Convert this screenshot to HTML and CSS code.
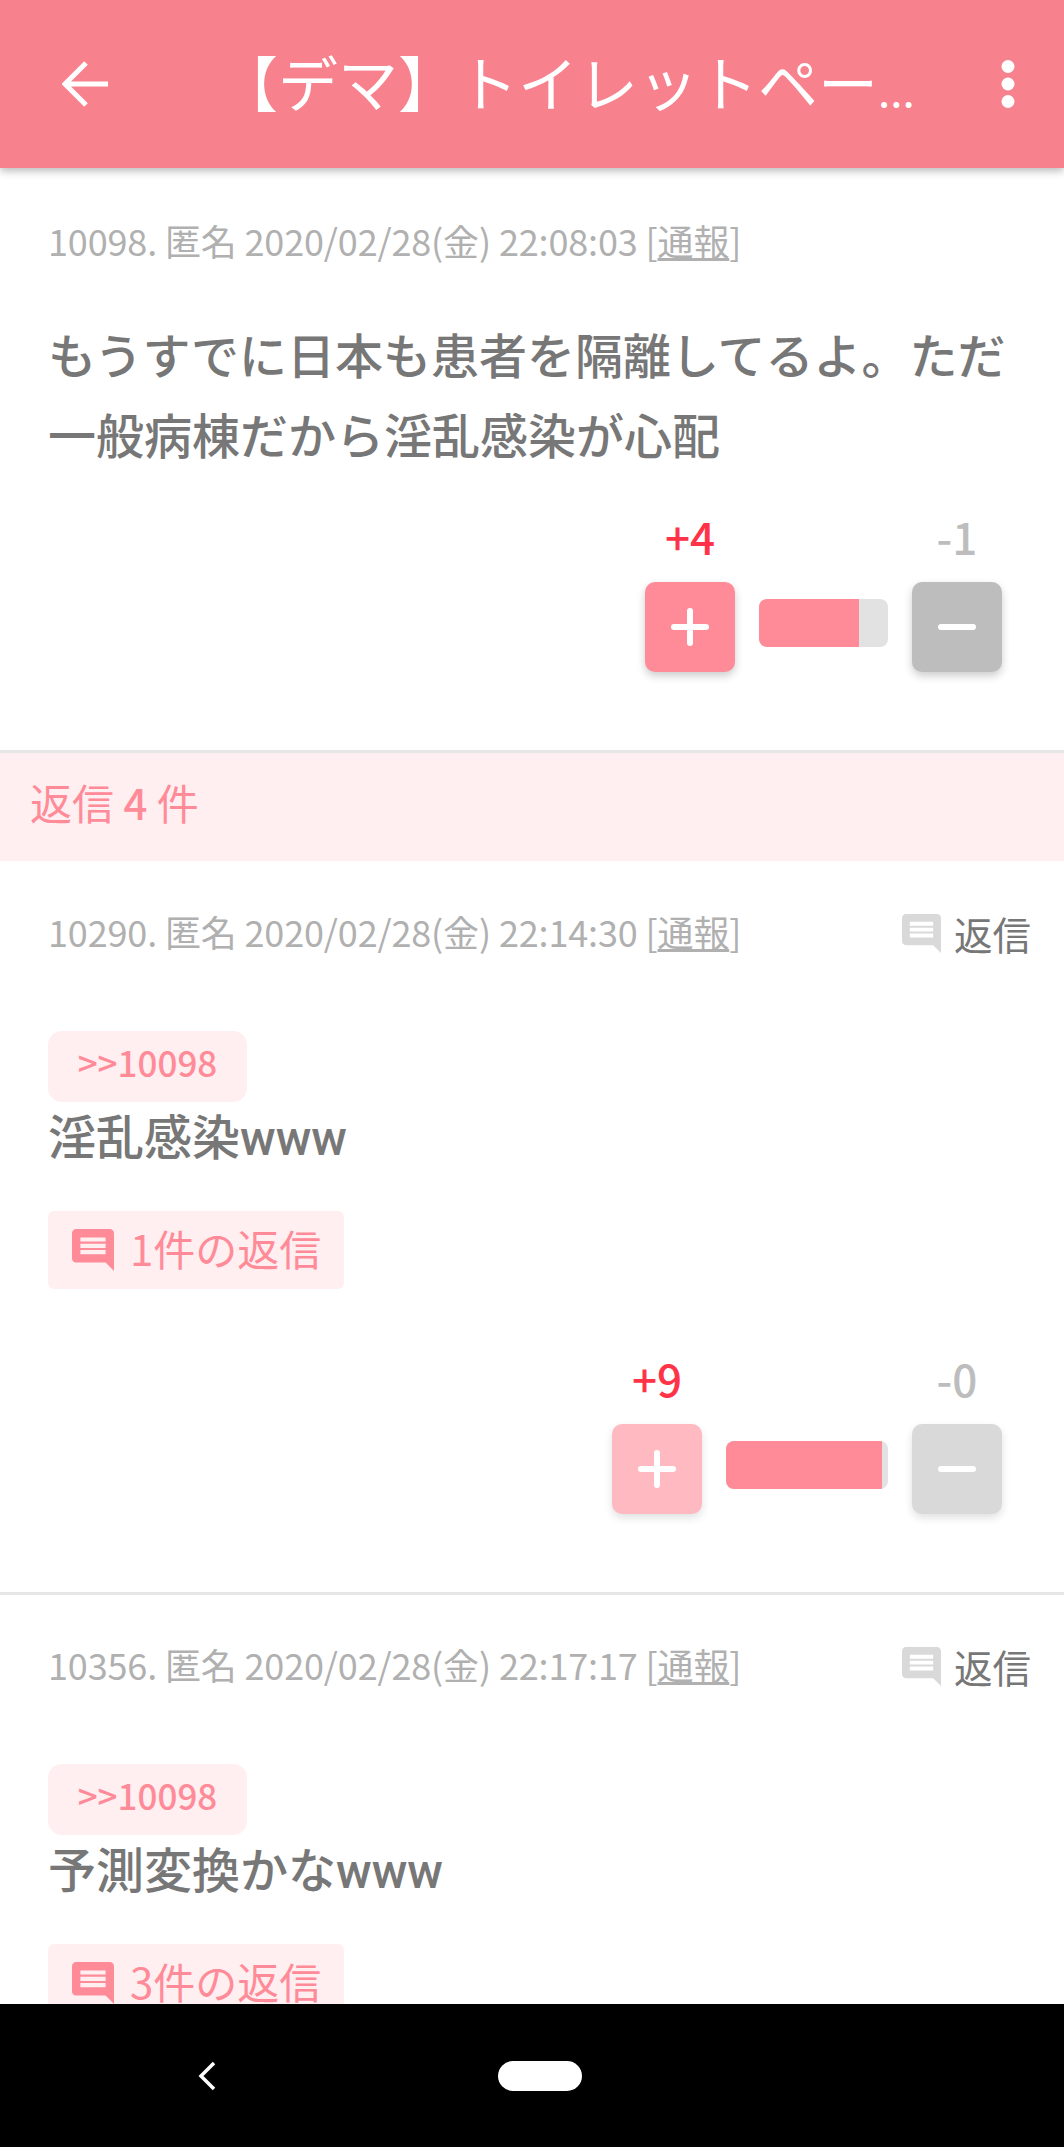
FILE: index.html
```html
<!DOCTYPE html>
<html lang="ja">
<head>
<meta charset="utf-8">
<title>【デマ】トイレットペー...</title>
<link rel="stylesheet" href="styles.css">
</head>
<body>
<div class="app">
  <header class="appbar">
    <svg class="back-icon" viewBox="0 0 48 48"><path d="M46 24H4M24 3 3 24l21 21" fill="none" stroke="#fff" stroke-width="5"/></svg>
    <div class="appbar-title">【デマ】トイレットペー<span class="dots">...</span></div>
    <svg class="more-icon" viewBox="0 0 14 48"><circle cx="7" cy="6.500" r="6.500" fill="#fff"/><circle cx="7" cy="24" r="6.500" fill="#fff"/><circle cx="7" cy="41.500" r="6.500" fill="#fff"/></svg>
  </header>
  <main class="list">
    <article class="post post-main">
      <div class="meta-row"><div class="meta">10098. 匿名 2020/02/28(金) 22:08:03 [<u>通報</u>]</div></div>
      <p class="main-text">もうすでに日本も患者を隔離してるよ。ただ<br>一般病棟だから淫乱感染が心配</p>
      <div class="votes">
        <div class="vote-col"><div class="count count-plus">+4</div><div class="vote-btn btn-plus"><span class="plus-mark"></span></div></div>
        <div class="ratio" style="width:129px"><div class="ratio-fill" style="width:77.500%"></div></div>
        <div class="vote-col"><div class="count count-minus">-1</div><div class="vote-btn btn-minus"><span class="minus-mark"></span></div></div>
      </div>
    </article>
    <div class="band">返信 <b>4</b> 件</div>
    <article class="post reply-post">
      <div class="meta-row"><div class="meta">10290. 匿名 2020/02/28(金) 22:14:30 [<u>通報</u>]</div><div class="reply-link"><svg class="icon-small" viewBox="2 2 20 20"><path d="M21.990 4c0-1.100-.890-2-1.990-2H4c-1.100 0-2 .900-2 2v12c0 1.100.900 2 2 2h14l4 4-.010-18zM18 14H6v-2h12v2zm0-3H6V9h12v2zm0-3H6V6h12v2z"/></svg>返信</div></div>
      <div class="anchor">&gt;&gt;10098</div>
      <p class="reply-text">淫乱感染www</p>
      <div class="thread"><svg class="icon-thread" viewBox="2 2 20 20"><path d="M21.990 4c0-1.100-.890-2-1.990-2H4c-1.100 0-2 .900-2 2v12c0 1.100.900 2 2 2h14l4 4-.010-18zM18 14H6v-2h12v2zm0-3H6V9h12v2zm0-3H6V6h12v2z"/></svg>1件の返信</div>
      <div class="votes votes-reply">
        <div class="vote-col"><div class="count count-plus">+9</div><div class="vote-btn btn-plus faded-plus"><span class="plus-mark"></span></div></div>
        <div class="ratio" style="width:162px"><div class="ratio-fill" style="width:96.300%"></div></div>
        <div class="vote-col"><div class="count count-minus">-0</div><div class="vote-btn btn-minus faded-minus"><span class="minus-mark"></span></div></div>
      </div>
    </article>
    <article class="post reply-post">
      <div class="meta-row"><div class="meta">10356. 匿名 2020/02/28(金) 22:17:17 [<u>通報</u>]</div><div class="reply-link"><svg class="icon-small" viewBox="2 2 20 20"><path d="M21.990 4c0-1.100-.890-2-1.990-2H4c-1.100 0-2 .900-2 2v12c0 1.100.900 2 2 2h14l4 4-.010-18zM18 14H6v-2h12v2zm0-3H6V9h12v2zm0-3H6V6h12v2z"/></svg>返信</div></div>
      <div class="anchor">&gt;&gt;10098</div>
      <p class="reply-text">予測変換かなwww</p>
      <div class="thread"><svg class="icon-thread" viewBox="2 2 20 20"><path d="M21.990 4c0-1.100-.890-2-1.990-2H4c-1.100 0-2 .900-2 2v12c0 1.100.900 2 2 2h14l4 4-.010-18zM18 14H6v-2h12v2zm0-3H6V9h12v2zm0-3H6V6h12v2z"/></svg>3件の返信</div>
    </article>
  </main>
  <nav class="navbar">
    <svg class="nav-back" viewBox="0 0 20 30"><path d="M17 2 4 15l13 13" fill="none" stroke="#fff" stroke-width="3.500"/></svg>
    <div class="nav-pill"></div>
  </nav>
</div>
</body>
</html>
```
FILE: styles.css
```css
* { box-sizing: border-box; }
html, body { margin: 0; padding: 0; background: #fff; }
body { font-family: "Noto Sans CJK JP", "Noto Sans", sans-serif; }
.app { width: 1064px; height: 2147px; display: flex; flex-direction: column; overflow: hidden; }
.appbar { position: relative; z-index: 2; flex: none; height: 168px; background: #f8818e; box-shadow: 0 3px 8px rgba(0,0,0,.28); display: flex; align-items: center; padding: 0 49px 0 62px; color: #fff; }
.back-icon { flex: none; width: 48px; height: 48px; }
.appbar-title { flex: 1; margin-left: 108px; font-size: 60px; line-height: 76px; white-space: nowrap; }
.more-icon { flex: none; width: 14px; height: 48px; }
.dots { font-size: 44px; }
.list { flex: 1; min-height: 0; overflow: hidden; }
.post { border-bottom: 3px solid #e6e6e6; }
.post-main { padding: 48px 62px 78px 48px; }
.reply-post { padding: 45px 33px 78px 48px; }
.reply-post + .reply-post { padding-top: 44px; }
.meta-row { display: flex; justify-content: space-between; align-items: flex-start; height: 54px; }
.meta { font-size: 36px; letter-spacing: -0.150px; line-height: 48px; color: #b0b0b0; white-space: nowrap; }
.reply-post .meta { line-height: 50px; }
.main-text { margin: 43px 0 41px; font-size: 48px; line-height: 80px; font-weight: 500; color: #777; white-space: nowrap; }
.votes { display: flex; justify-content: flex-end; align-items: flex-start; gap: 24px; }
.votes-reply { margin: 67px 29px 0 0; }
.vote-col { display: flex; flex-direction: column; align-items: center; gap: 24px; }
.count { font-size: 44px; line-height: 44px; font-weight: 500; }
.count-plus { color: #ff3347; }
.count-minus { color: #bdbdbd; }
.vote-btn { width: 90px; height: 90px; border-radius: 10px; box-shadow: 0 4px 8px rgba(0,0,0,.2); display: flex; align-items: center; justify-content: center; }
.btn-plus { background: #ff8b99; }
.btn-minus { background: #bdbdbd; }
.faded-plus { background: #ffb9c1; box-shadow: 0 4px 8px rgba(0,0,0,.12); }
.faded-minus { background: #d9d9d9; box-shadow: 0 4px 8px rgba(0,0,0,.12); }
.plus-mark { position: relative; width: 38px; height: 6px; border-radius: 3px; background: #fff; }
.plus-mark::after { content: ""; position: absolute; left: 16px; top: -16px; width: 6px; height: 38px; border-radius: 3px; background: #fff; }
.minus-mark { width: 38px; height: 6px; border-radius: 3px; background: #fff; }
.ratio { margin-top: 85px; height: 48px; border-radius: 8px; background: #e2e2e2; overflow: hidden; }
.ratio-fill { height: 100%; background: #ff8b99; }
.band { height: 108px; background: #ffeff1; color: #ff8b99; font-size: 42px; line-height: 98px; padding-left: 30px; }
.band b { font-weight: 500; }
.reply-link { display: flex; align-items: center; gap: 13px; font-size: 38.500px; line-height: 54px; color: #777; }
.icon-small { width: 39px; height: 39px; fill: #d9d9d9; }
.anchor { width: 199px; height: 71px; margin-top: 71px; border-radius: 14px; background: #ffeff1; color: #ff8b99; font-size: 35px; line-height: 62px; font-weight: 500; text-align: center; }
.reply-text { margin: 0 0 35px; font-family: Roboto, "Noto Sans CJK JP", sans-serif; font-size: 48px; line-height: 74px; font-weight: 500; color: #777; }
.thread { width: 296px; height: 78px; padding: 0 0 5px 24px; display: flex; align-items: center; gap: 16px; border-radius: 6px; background: #ffeff1; color: #ff8b99; font-size: 42px; }
.icon-thread { flex: none; width: 42px; height: 42px; margin-top: 5px; fill: #ff8b99; }
.navbar { position: relative; z-index: 2; flex: none; height: 143px; background: #000; display: flex; align-items: center; padding: 0 0 0 197px; }
.nav-back { width: 20px; height: 30px; }
.nav-pill { width: 84px; height: 30px; border-radius: 15px; background: #fff; margin-left: 281px; }
```
